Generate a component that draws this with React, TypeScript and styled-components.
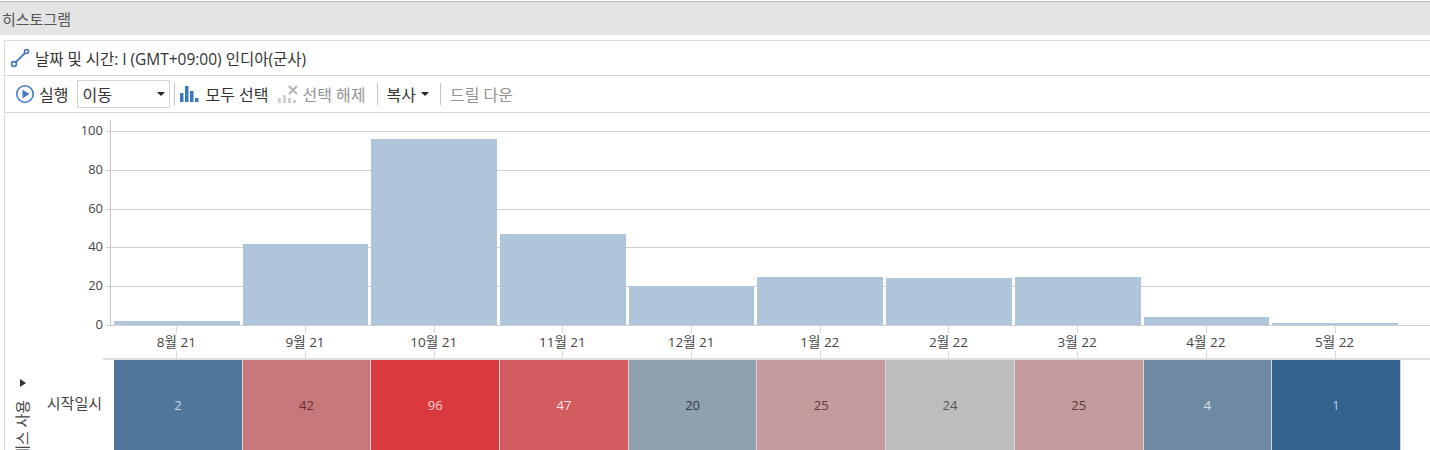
import React from 'react';
import styled, { createGlobalStyle } from 'styled-components';

const FONT = `"Open Sans", "Noto Sans CJK KR", sans-serif`;

const TICKS = [100, 80, 60, 40, 20, 0];

const months = [
  { label: '8월 21', value: 2, cell: '#50769a', text: '#c5d6e6' },
  { label: '9월 21', value: 42, cell: '#c7787b', text: '#6a3030' },
  { label: '10월 21', value: 96, cell: '#da393d', text: '#f5d5d5' },
  { label: '11월 21', value: 47, cell: '#d25c5f', text: '#fbe3e3' },
  { label: '12월 21', value: 20, cell: '#90a0af', text: '#2f3a45' },
  { label: '1월 22', value: 25, cell: '#c59c9d', text: '#5a3a3a' },
  { label: '2월 22', value: 24, cell: '#bdbdbd', text: '#555555' },
  { label: '3월 22', value: 25, cell: '#c59c9d', text: '#5a3a3a' },
  { label: '4월 22', value: 4, cell: '#6e8aa2', text: '#d3e0ea' },
  { label: '5월 22', value: 1, cell: '#33638c', text: '#b5cde2' },
];

const App = () => (
  <>
    <GlobalStyle />
    <Page>
      <TitleBar>히스토그램</TitleBar>
      <Panel>
        <PanelHeader>
          <svg width="20" height="20" viewBox="0 0 20 20" fill="none">
            <line x1="5" y1="15" x2="15" y2="5" stroke="#4a7fc0" strokeWidth="1.8" />
            <circle cx="4" cy="16" r="2.4" fill="#fff" stroke="#3f74b8" strokeWidth="1.6" />
            <circle cx="16.5" cy="3.5" r="2" fill="#fff" stroke="#3f74b8" strokeWidth="1.6" />
          </svg>
          <span>날짜 및 시간: l (GMT+09:00) 인디아(군사)</span>
        </PanelHeader>
        <Toolbar>
          <ToolButton $after={9}>
            <svg width="20" height="20" viewBox="0 0 20 20" fill="none">
              <circle cx="10" cy="10" r="8.2" stroke="#3f7cc4" strokeWidth="1.6" />
              <path d="M7.5 5.8 L14.5 10 L7.5 14.2 Z" fill="#3f7cc4" />
            </svg>
            실행
          </ToolButton>
          <Select>
            <span>이동</span>
            <Caret />
          </Select>
          <Divider $left={4} $right={4} />
          <ToolButton $gap={6}>
            <svg width="20" height="20" viewBox="0 0 20 20" fill="#3a78bf">
              <rect x="1" y="9" width="3.5" height="9" />
              <rect x="6" y="2" width="3.5" height="16" />
              <rect x="11" y="7" width="3.5" height="11" />
              <rect x="16" y="14" width="3.5" height="4" />
            </svg>
            모두 선택
          </ToolButton>
          <ToolButton $disabled>
            <svg width="22" height="20" viewBox="0 0 22 20" fill="#cfcfcf">
              <rect x="1" y="14" width="3" height="5" />
              <rect x="6" y="11" width="3" height="8" />
              <rect x="11" y="14" width="3" height="5" />
              <rect x="16" y="16" width="3" height="3" />
              <path d="M12 2 L20 10 M20 2 L12 10" stroke="#b5b5b5" strokeWidth="2.2" />
            </svg>
            선택 해제
          </ToolButton>
          <Divider />
          <ToolButton $gap={5} $after={8}>
            복사
            <Caret />
          </ToolButton>
          <Divider />
          <ToolButton $disabled>드릴 다운</ToolButton>
        </Toolbar>
        <ChartArea>
          <YAxis>
            {TICKS.map((tick) => (
              <YTick key={tick}>{tick}</YTick>
            ))}
          </YAxis>
          <Plot>
            <GridLines>
              {TICKS.map((tick) => (
                <GridLine key={tick} />
              ))}
            </GridLines>
            <Bars>
              {months.map((m) => (
                <BarSlot key={m.label}>
                  <Bar style={{ height: `${m.value * 1.94}px` }} />
                </BarSlot>
              ))}
            </Bars>
          </Plot>
        </ChartArea>
        <XAxis>
          {months.map((m) => (
            <XLabel key={m.label}>{m.label}</XLabel>
          ))}
        </XAxis>
        <HeatRow>
          <SideBar>
            <ExpandArrow />
            <VerticalLabel>프로세스 사용</VerticalLabel>
          </SideBar>
          <RowLabel>시작일시</RowLabel>
          <Cells>
            {months.map((m) => (
              <Cell key={m.label} $bg={m.cell} $fg={m.text}>
                {m.value}
              </Cell>
            ))}
          </Cells>
        </HeatRow>
      </Panel>
    </Page>
  </>
);
export default App;

const GlobalStyle = createGlobalStyle`
  html, body {
    margin: 0;
    padding: 0;
    background: #fff;
    overflow: hidden;
  }
  body {
    font-family: ${FONT};
    font-size: 14px;
    color: #333;
  }
`;

const Page = styled.div`
  width: 1430px;
  height: 450px;
  overflow: hidden;
  display: flex;
  flex-direction: column;
`;

const TitleBar = styled.div`
  height: 33px;
  margin-top: 1px;
  border-top: 1px solid #b9b9b9;
  background: #e4e4e4;
  display: flex;
  align-items: center;
  padding-left: 2px;
  font-size: 15px;
  color: #555;
`;

const Panel = styled.div`
  margin: 5px 0 0 4px;
  flex: 1;
  min-height: 0;
  border-top: 1px solid #dcdcdc;
  border-left: 1px solid #dcdcdc;
  display: flex;
  flex-direction: column;
`;

const PanelHeader = styled.div`
  height: 34px;
  flex: none;
  display: flex;
  align-items: center;
  gap: 5px;
  padding-left: 5px;
  border-bottom: 1px solid #d8d8d8;
  font-size: 15.5px;
  color: #333;
`;

const Toolbar = styled.div`
  height: 36px;
  flex: none;
  display: flex;
  align-items: center;
  padding-left: 10px;
  border-bottom: 1px solid #d8d8d8;
`;

const ToolButton = styled.div<{ $disabled?: boolean; $gap?: number; $after?: number }>`
  display: flex;
  align-items: center;
  gap: ${({ $gap }) => $gap ?? 4}px;
  font-size: 16px;
  white-space: nowrap;
  margin-right: ${({ $after }) => $after ?? 8}px;
  color: ${({ $disabled }) => ($disabled ? '#929292' : '#333')};
`;

const Select = styled.div`
  width: 93px;
  height: 28px;
  box-sizing: border-box;
  border: 1px solid #d4d4d4;
  display: flex;
  align-items: center;
  justify-content: space-between;
  padding: 0 4px 0 4px;
  font-size: 16px;
`;

const Caret = styled.i`
  width: 0;
  height: 0;
  border-left: 4px solid transparent;
  border-right: 4px solid transparent;
  border-top: 4px solid #222;
`;

const Divider = styled.div<{ $left?: number; $right?: number }>`
  width: 1px;
  height: 22px;
  background: #c4c4c4;
  margin-left: ${({ $left }) => $left ?? 3}px;
  margin-right: ${({ $right }) => $right ?? 9}px;
`;

const ChartArea = styled.div`
  height: 213px;
  flex: none;
  display: flex;
`;

const YAxis = styled.div`
  width: 105px;
  box-sizing: border-box;
  padding: 8px 7px 0 0;
  display: flex;
  flex-direction: column;
  align-items: flex-end;
  font-size: 13px;
  color: #444;
`;

const YTick = styled.div`
  height: 19.4px;
  margin-bottom: 19.4px;
  line-height: 19.4px;
`;

const Plot = styled.div`
  flex: 1;
  position: relative;
  border-left: 1px solid #c8c8c8;
  margin-top: 7px;
`;

const GridLines = styled.div`
  position: absolute;
  inset: 11px 0 0 0;
`;

const GridLine = styled.div`
  height: 38.8px;
  box-sizing: border-box;
  border-top: 1px solid #cfcfd4;
  position: relative;
  &::before {
    content: '';
    position: absolute;
    left: -5px;
    top: -1px;
    width: 4px;
    height: 1px;
    background: #cfcfd4;
  }
`;

const Bars = styled.div`
  position: absolute;
  left: 3px;
  top: 0;
  height: 205px;
  display: flex;
  align-items: flex-end;
`;

const BarSlot = styled.div`
  width: 128.7px;
  display: flex;
  align-items: flex-end;
`;

const Bar = styled.div`
  width: 125.7px;
  background: #aec5da;
`;

const XAxis = styled.div`
  height: 32px;
  flex: none;
  display: flex;
  border-bottom: 2px solid #dddddd;
  margin-left: 98px;
  padding-left: 9px;
`;

const XLabel = styled.div`
  width: 128.7px;
  text-align: center;
  font-size: 13.5px;
  line-height: 32px;
  color: #444;
  position: relative;
  &::before,
  &::after {
    content: '';
    position: absolute;
    left: 50%;
    width: 1px;
    background: #d8d8d8;
  }
  &::before {
    top: 0;
    height: 7px;
  }
  &::after {
    bottom: 0;
    height: 7px;
  }
`;

const HeatRow = styled.div`
  flex: 1;
  display: flex;
  min-height: 0;
`;

const SideBar = styled.div`
  width: 28px;
  position: relative;
`;

const ExpandArrow = styled.i`
  position: absolute;
  left: 15px;
  top: 19px;
  width: 0;
  height: 0;
  border-top: 4px solid transparent;
  border-bottom: 4px solid transparent;
  border-left: 6px solid #333;
`;

const VerticalLabel = styled.div`
  position: absolute;
  left: 6px;
  top: 40px;
  writing-mode: vertical-rl;
  text-orientation: sideways;
  transform: rotate(180deg);
  font-size: 15px;
  white-space: nowrap;
  color: #444;
`;

const RowLabel = styled.div`
  width: 71px;
  box-sizing: border-box;
  padding: 32px 2px 0 0;
  margin-right: 10px;
  text-align: right;
  font-size: 15px;
  white-space: nowrap;
  color: #444;
`;

const Cells = styled.div`
  display: flex;
  height: 110px;
`;

const Cell = styled.div<{ $bg: string; $fg: string }>`
  width: 128.7px;
  box-sizing: border-box;
  background: ${({ $bg }) => $bg};
  color: ${({ $fg }) => $fg};
  border-right: 1px solid #d5d5d5;
  padding-top: 36px;
  text-align: center;
  font-size: 13px;
`;
